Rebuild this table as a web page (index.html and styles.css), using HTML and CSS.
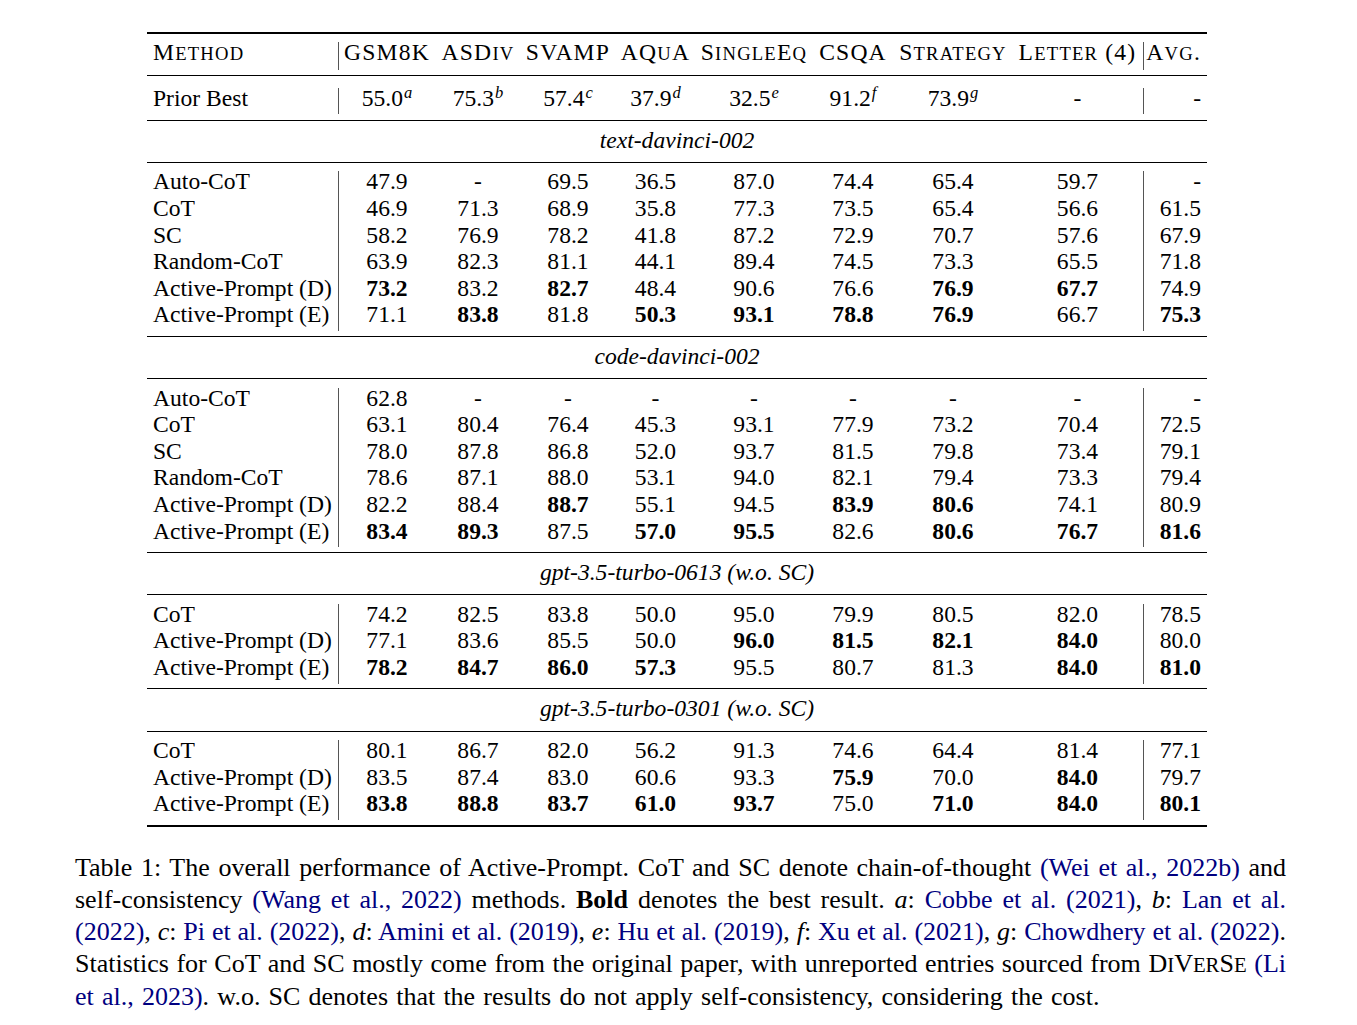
FILE: index.html
```html
<!DOCTYPE html>
<html lang="en">
<head>
<meta charset="utf-8">
<title>Table 1: Active-Prompt</title>
<link rel="stylesheet" href="styles.css">
</head>
<body>
<div class="page">
  <div class="tbl">
    <div class="rule thick"></div>
    <div class="block head">
      <div class="row">
        <span class="m">M<span class="sc">ETHOD</span></span>
        <span>GSM8K</span>
        <span>ASD<span class="sc">IV</span></span>
        <span>SVAMP</span>
        <span>AQ<span class="sc">U</span>A</span>
        <span>S<span class="sc">INGLE</span>E<span class="sc">Q</span></span>
        <span>CSQA</span>
        <span>S<span class="sc">TRATEGY</span></span>
        <span class="l">L<span class="sc">ETTER</span> (4)</span>
        <span class="a">A<span class="sc">VG</span>.</span>
      </div>
    </div>
    <div class="rule"></div>
    <div class="block prior">
      <div class="row">
        <span class="m">Prior Best</span>
        <span>55.0<sup class="s">a</sup></span>
        <span>75.3<sup class="s">b</sup></span>
        <span>57.4<sup class="s">c</sup></span>
        <span>37.9<sup class="s">d</sup></span>
        <span>32.5<sup class="s">e</sup></span>
        <span>91.2<sup class="s">f</sup></span>
        <span>73.9<sup class="s">g</sup></span>
        <span class="l">-</span>
        <span class="a">-</span>
      </div>
    </div>
    <div class="rule"></div>
    <div class="section">text-davinci-002</div>
    <div class="rule"></div>
    <div class="block">
      <div class="row"><span class="m">Auto-CoT</span><span>47.9</span><span>-</span><span>69.5</span><span>36.5</span><span>87.0</span><span>74.4</span><span>65.4</span><span class="l">59.7</span><span class="a">-</span></div>
      <div class="row"><span class="m">CoT</span><span>46.9</span><span>71.3</span><span>68.9</span><span>35.8</span><span>77.3</span><span>73.5</span><span>65.4</span><span class="l">56.6</span><span class="a">61.5</span></div>
      <div class="row"><span class="m">SC</span><span>58.2</span><span>76.9</span><span>78.2</span><span>41.8</span><span>87.2</span><span>72.9</span><span>70.7</span><span class="l">57.6</span><span class="a">67.9</span></div>
      <div class="row"><span class="m">Random-CoT</span><span>63.9</span><span>82.3</span><span>81.1</span><span>44.1</span><span>89.4</span><span>74.5</span><span>73.3</span><span class="l">65.5</span><span class="a">71.8</span></div>
      <div class="row"><span class="m">Active-Prompt (D)</span><span class="b">73.2</span><span>83.2</span><span class="b">82.7</span><span>48.4</span><span>90.6</span><span>76.6</span><span class="b">76.9</span><span class="l b">67.7</span><span class="a">74.9</span></div>
      <div class="row"><span class="m">Active-Prompt (E)</span><span>71.1</span><span class="b">83.8</span><span>81.8</span><span class="b">50.3</span><span class="b">93.1</span><span class="b">78.8</span><span class="b">76.9</span><span class="l">66.7</span><span class="a b">75.3</span></div>
    </div>
    <div class="rule"></div>
    <div class="section">code-davinci-002</div>
    <div class="rule"></div>
    <div class="block">
      <div class="row"><span class="m">Auto-CoT</span><span>62.8</span><span>-</span><span>-</span><span>-</span><span>-</span><span>-</span><span>-</span><span class="l">-</span><span class="a">-</span></div>
      <div class="row"><span class="m">CoT</span><span>63.1</span><span>80.4</span><span>76.4</span><span>45.3</span><span>93.1</span><span>77.9</span><span>73.2</span><span class="l">70.4</span><span class="a">72.5</span></div>
      <div class="row"><span class="m">SC</span><span>78.0</span><span>87.8</span><span>86.8</span><span>52.0</span><span>93.7</span><span>81.5</span><span>79.8</span><span class="l">73.4</span><span class="a">79.1</span></div>
      <div class="row"><span class="m">Random-CoT</span><span>78.6</span><span>87.1</span><span>88.0</span><span>53.1</span><span>94.0</span><span>82.1</span><span>79.4</span><span class="l">73.3</span><span class="a">79.4</span></div>
      <div class="row"><span class="m">Active-Prompt (D)</span><span>82.2</span><span>88.4</span><span class="b">88.7</span><span>55.1</span><span>94.5</span><span class="b">83.9</span><span class="b">80.6</span><span class="l">74.1</span><span class="a">80.9</span></div>
      <div class="row"><span class="m">Active-Prompt (E)</span><span class="b">83.4</span><span class="b">89.3</span><span>87.5</span><span class="b">57.0</span><span class="b">95.5</span><span>82.6</span><span class="b">80.6</span><span class="l b">76.7</span><span class="a b">81.6</span></div>
    </div>
    <div class="rule"></div>
    <div class="section">gpt-3.5-turbo-0613 (w.o. SC)</div>
    <div class="rule"></div>
    <div class="block">
      <div class="row"><span class="m">CoT</span><span>74.2</span><span>82.5</span><span>83.8</span><span>50.0</span><span>95.0</span><span>79.9</span><span>80.5</span><span class="l">82.0</span><span class="a">78.5</span></div>
      <div class="row"><span class="m">Active-Prompt (D)</span><span>77.1</span><span>83.6</span><span>85.5</span><span>50.0</span><span class="b">96.0</span><span class="b">81.5</span><span class="b">82.1</span><span class="l b">84.0</span><span class="a">80.0</span></div>
      <div class="row"><span class="m">Active-Prompt (E)</span><span class="b">78.2</span><span class="b">84.7</span><span class="b">86.0</span><span class="b">57.3</span><span>95.5</span><span>80.7</span><span>81.3</span><span class="l b">84.0</span><span class="a b">81.0</span></div>
    </div>
    <div class="rule"></div>
    <div class="section">gpt-3.5-turbo-0301 (w.o. SC)</div>
    <div class="rule"></div>
    <div class="block">
      <div class="row"><span class="m">CoT</span><span>80.1</span><span>86.7</span><span>82.0</span><span>56.2</span><span>91.3</span><span>74.6</span><span>64.4</span><span class="l">81.4</span><span class="a">77.1</span></div>
      <div class="row"><span class="m">Active-Prompt (D)</span><span>83.5</span><span>87.4</span><span>83.0</span><span>60.6</span><span>93.3</span><span class="b">75.9</span><span>70.0</span><span class="l b">84.0</span><span class="a">79.7</span></div>
      <div class="row"><span class="m">Active-Prompt (E)</span><span class="b">83.8</span><span class="b">88.8</span><span class="b">83.7</span><span class="b">61.0</span><span class="b">93.7</span><span>75.0</span><span class="b">71.0</span><span class="l b">84.0</span><span class="a b">80.1</span></div>
    </div>
    <div class="rule thick"></div>
  </div>

  <div class="caption">
    <span class="line">Table 1: The overall performance of Active-Prompt. CoT and SC denote chain-of-thought <a class="cite">(Wei et al., 2022b)</a> and</span>
    <span class="line">self-consistency <a class="cite">(Wang et al., 2022)</a> methods. <b>Bold</b> denotes the best result. <i>a</i>: <a class="cite">Cobbe et al. (2021)</a>, <i>b</i>: <a class="cite">Lan et al.</a></span>
    <span class="line"><a class="cite">(2022)</a>, <i>c</i>: <a class="cite">Pi et al. (2022)</a>, <i>d</i>: <a class="cite">Amini et al. (2019)</a>, <i>e</i>: <a class="cite">Hu et al. (2019)</a>, <i>f</i>: <a class="cite">Xu et al. (2021)</a>, <i>g</i>: <a class="cite">Chowdhery et al. (2022)</a>.</span>
    <span class="line">Statistics for CoT and SC mostly come from the original paper, with unreported entries sourced from D<span class="sc">I</span>V<span class="sc">ER</span>S<span class="sc">E</span> <a class="cite">(Li</a></span>
    <span class="line last"><a class="cite">et al., 2023)</a>. w.o. SC denotes that the results do not apply self-consistency, considering the cost.</span>
  </div>
</div>
</body>
</html>
```

FILE: styles.css
```css
* {
  box-sizing: border-box;
}

html, body {
  margin: 0;
  padding: 0;
  background: #ffffff;
}

body {
  font-family: "Liberation Serif", "Times New Roman", serif;
  color: #000000;
}

.page {
  padding-top: 32px;
}

.tbl {
  margin-left: 147px;
  width: 1060px;
  font-size: 23.6px;
}

.rule {
  height: 1px;
  background: #000000;
}

.rule.thick {
  height: 2px;
}

.block {
  padding-top: 8.6px;
  padding-bottom: 4.9px;
}

.block.head {
  padding-top: 8.4px;
  padding-bottom: 5.3px;
  letter-spacing: 1.2px;
}

.block.prior {
  padding-top: 11.6px;
  padding-bottom: 5.3px;
}

.row {
  display: grid;
  grid-template-columns: 192px 96px 86px 94px 81px 116px 82px 118px 132px 63px;
}

.row > span {
  line-height: 21px;
  padding-bottom: 5.6px;
  text-align: center;
  white-space: nowrap;
}

.row > .m {
  text-align: left;
  padding-left: 6px;
  border-right: 1px solid #555555;
}

.row > .l {
  border-right: 1px solid #555555;
}

.row > .a {
  text-align: right;
  padding-right: 6px;
}

.row > .b {
  font-weight: bold;
}

.sc {
  font-size: 0.79em;
}

.s {
  font-size: 0.7em;
  font-style: italic;
  line-height: 0;
  vertical-align: 0.5em;
  margin-left: 1px;
}

.section {
  text-align: center;
  font-style: italic;
  line-height: 21px;
  padding-top: 9px;
  padding-bottom: 11.1px;
}

.caption {
  margin: 25px 0 0 75px;
  width: 1211px;
  font-size: 26px;
  line-height: 32px;
}

.caption .line {
  display: block;
  text-align: justify;
  text-align-last: justify;
}

.caption .line.last {
  text-align: left;
  text-align-last: left;
  word-spacing: 1.7px;
}

.caption .sc {
  font-size: 0.8em;
}

.cite {
  color: #000080;
  text-decoration: none;
}
```
